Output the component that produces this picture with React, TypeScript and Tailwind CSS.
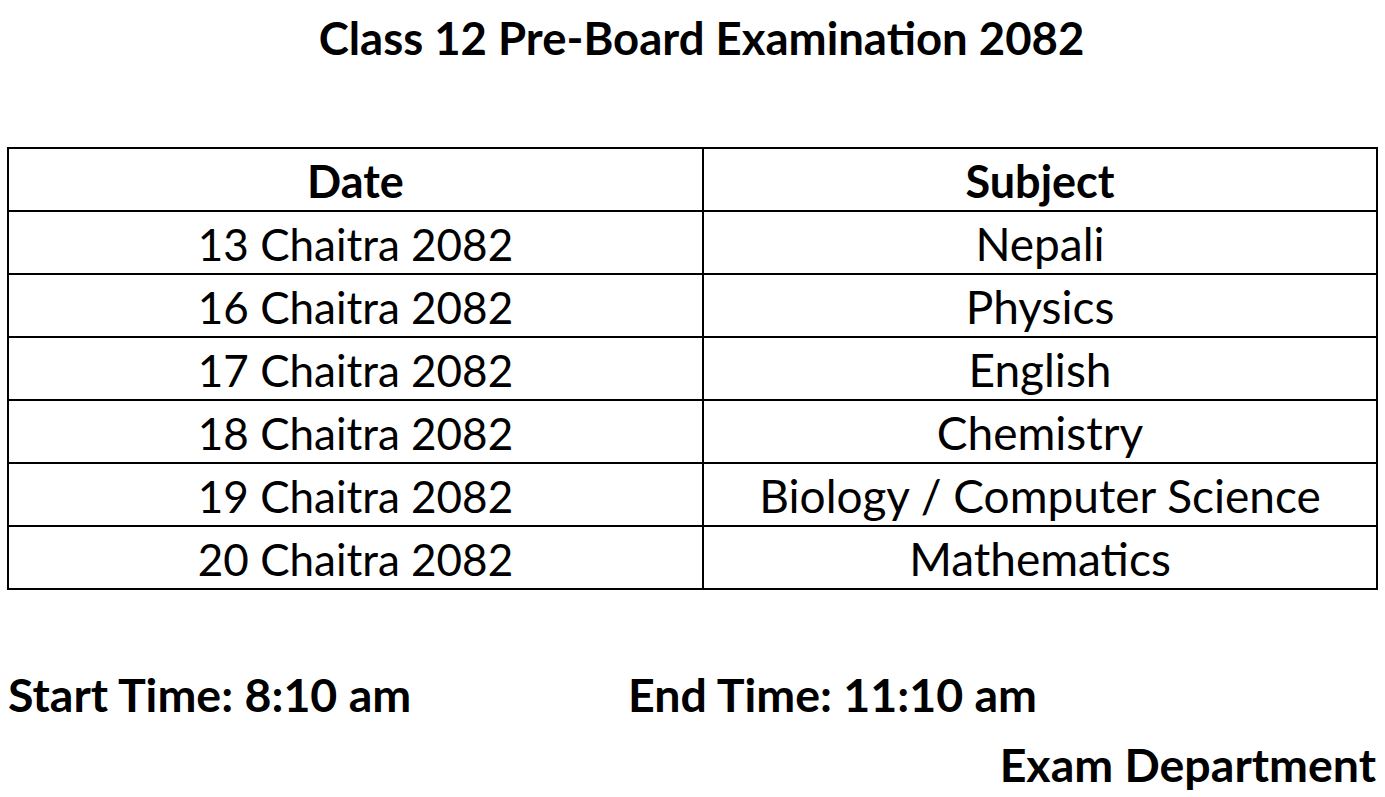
const rows = [
  { date: '13 Chaitra 2082', subject: 'Nepali' },
  { date: '16 Chaitra 2082', subject: 'Physics' },
  { date: '17 Chaitra 2082', subject: 'English' },
  { date: '18 Chaitra 2082', subject: 'Chemistry' },
  { date: '19 Chaitra 2082', subject: 'Biology / Computer Science' },
  { date: '20 Chaitra 2082', subject: 'Mathematics' },
];

export default function App() {
  return (
    <div className="w-[1385px] h-[797px] bg-white text-black overflow-hidden font-['Lato',sans-serif]">
      <h1 className="pt-[12px] pl-[18px] text-center text-[45.5px] leading-[52px] font-bold">
        Class 12 Pre-Board Examination 2082
      </h1>

      <div className="mt-[83px] px-[7px]">
        <table className="w-[1371px] border-collapse border-2 border-black table-fixed">
          <colgroup>
            <col className="w-[695px]" />
            <col />
          </colgroup>
          <thead>
            <tr className="h-[63px]">
              <th className="border-2 border-black text-[45px] leading-[52px] font-bold p-0 pt-[2px]">Date</th>
              <th className="border-2 border-black text-[45px] leading-[52px] font-bold p-0 pt-[2px]">Subject</th>
            </tr>
          </thead>
          <tbody>
            {rows.map((r) => (
              <tr key={r.date} className="h-[63px]">
                <td className="border-2 border-black text-center text-[44px] leading-[52px] font-normal p-0 pt-[2px]">{r.date}</td>
                <td className="border-2 border-black text-center text-[46px] leading-[52px] font-normal p-0 pt-[2px]">{r.subject}</td>
              </tr>
            ))}
          </tbody>
        </table>
      </div>

      <div className="mt-[78px] pl-[8px] flex text-[46.5px] leading-[52px] font-bold">
        <div className="w-[620px]">Start Time: 8:10 am</div>
        <div>End Time: 11:10 am</div>
      </div>
      <div className="mt-[18px] pr-[9px] text-right text-[46.5px] leading-[52px] font-bold">
        Exam Department
      </div>
    </div>
  );
}
